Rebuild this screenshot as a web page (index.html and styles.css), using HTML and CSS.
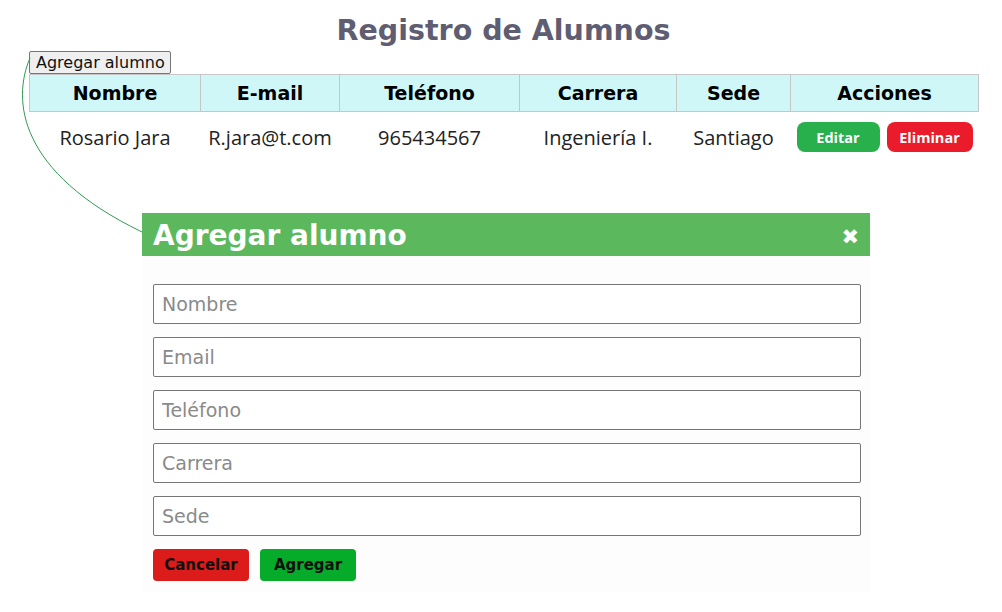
FILE: index.html
```html
<!DOCTYPE html>
<html lang="es">
<head>
<meta charset="utf-8">
<title>Registro de Alumnos</title>
<link rel="stylesheet" href="styles.css">
</head>
<body>
<div class="page">
  <h1 class="title">Registro de Alumnos</h1>
  <button class="add-btn">Agregar alumno</button>
  <table class="grid">
    <colgroup>
      <col class="c1"><col class="c2"><col class="c3"><col class="c4"><col class="c5"><col class="c6">
    </colgroup>
    <thead>
      <tr><th>Nombre</th><th>E-mail</th><th>Teléfono</th><th>Carrera</th><th>Sede</th><th>Acciones</th></tr>
    </thead>
    <tbody>
      <tr>
        <td>Rosario Jara</td><td>R.jara@t.com</td><td>965434567</td><td>Ingeniería I.</td><td>Santiago</td>
        <td class="actions"><span class="act edit">Editar</span><span class="act del">Eliminar</span></td>
      </tr>
    </tbody>
  </table>
</div>

<svg class="curve" width="160" height="240" viewBox="0 0 160 240"><path d="M30 58 C12 100 18 172 142 232" fill="none" stroke="#2f9a52" stroke-width="1"/></svg>

<div class="modal">
  <div class="modal-head">
    <span class="modal-title">Agregar alumno</span>
    <span class="close">✖</span>
  </div>
  <div class="modal-body">
    <input class="field" placeholder="Nombre">
    <input class="field" placeholder="Email">
    <input class="field" placeholder="Teléfono">
    <input class="field" placeholder="Carrera">
    <input class="field" placeholder="Sede">
    <div class="btns">
      <button class="b cancel">Cancelar</button>
      <button class="b ok">Agregar</button>
    </div>
  </div>
</div>
</body>
</html>
```
FILE: styles.css
```css
html, body { margin: 0; padding: 0; background: #fff; }
body { font-family: "DejaVu Sans", sans-serif; }
.page { padding: 10px 24px 0 29px; }
.title {
  margin: 0;
  text-align: center;
  font-family: "DejaVu Sans", sans-serif;
  font-weight: bold;
  font-size: 28.5px;
  line-height: 41px;
  color: #5e5d72;
  padding-right: 0;
}
.add-btn {
  display: block;
  margin: 0;
  height: 23px;
  padding: 0 5px 0 6px;
  font-family: "DejaVu Sans", sans-serif;
  font-size: 16px;
  color: #111;
  background: #efefef;
  border: 1px solid #767676;
  border-radius: 2px;
}
.grid { border-collapse: collapse; width: 949px; table-layout: fixed; }
.c1 { width: 171px; } .c2 { width: 139px; } .c3 { width: 180px; }
.c4 { width: 157px; } .c5 { width: 114px; } .c6 { width: 188px; }
.grid th {
  background: #cff7f7;
  border: 1px solid #c6c6c6;
  height: 36px;
  padding: 0;
  font-family: "DejaVu Sans", sans-serif;
  font-weight: bold;
  font-size: 19px;
  color: #000;
}
.grid td {
  height: 50px;
  padding: 0;
  text-align: center;
  font-family: "Open Sans", sans-serif;
  font-size: 20px;
  color: #222;
}
.actions { text-align: center; }
.act {
  display: inline-flex;
  align-items: center;
  justify-content: center;
  height: 30px;
  border-radius: 8px;
  color: #fff;
  font-family: "Open Sans", sans-serif;
  font-weight: bold;
  font-size: 14.5px;
  vertical-align: middle;
}
.edit { width: 83px; background: #27b04b; margin-right: 7px; }
.del { width: 86px; background: #ea1b2b; }

.curve { position: absolute; left: 0; top: 0; }

.modal {
  position: absolute;
  left: 142px;
  top: 213px;
  width: 728px;
  background: #fdfdfd;
}
.modal-head {
  height: 43px;
  background: #5cb85c;
  display: flex;
  align-items: center;
  justify-content: space-between;
  padding: 0 11px 0 11px;
}
.modal-title {
  color: #fff;
  font-family: "DejaVu Sans", sans-serif;
  font-weight: bold;
  font-size: 28px;
  line-height: 43px;
  padding-top: 2px;
}
.close { color: #fff; font-size: 21px; font-family: "DejaVu Sans", sans-serif; font-weight: bold; padding-top: 4px; }
.modal-body {
  padding: 28px 9px 11px 11px;
  display: flex;
  flex-direction: column;
  gap: 13px;
}
.field {
  box-sizing: border-box;
  width: 708px;
  height: 40px;
  margin: 0;
  border: 1px solid #767676;
  border-radius: 2px;
  padding: 0 8px;
  font-family: "DejaVu Sans", sans-serif;
  font-size: 19px;
  background: #fff;
}
.field::placeholder { color: #8a8a8a; }
.btns { display: flex; gap: 11px; }
.b {
  width: 96px;
  height: 32px;
  border: 0;
  border-radius: 4px;
  font-family: "DejaVu Sans", sans-serif;
  font-weight: bold;
  font-size: 15px;
  color: #111;
  padding: 0;
}
.cancel { background: #dc1b1b; }
.ok { background: #06ab2a; }
```
